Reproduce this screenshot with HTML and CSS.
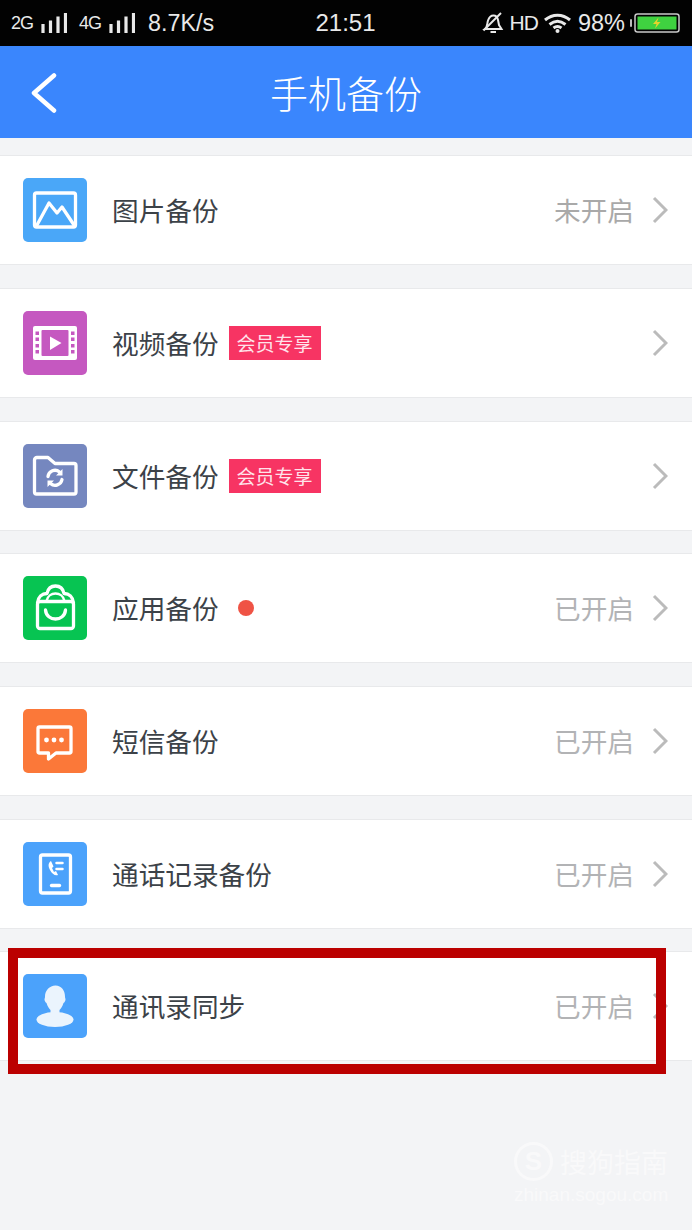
FILE: index.html
```html
<!DOCTYPE html>
<html lang="zh-CN">
<head>
<meta charset="utf-8">
<title>手机备份</title>
<link rel="stylesheet" href="styles.css">
</head>
<body>
<div class="page">
  <div class="statusbar">
    <div class="sb-left">
      <span class="net">2G</span>
      <svg class="bars" viewBox="0 0 26 20"><path d="M2 20V11M9.500 20V7.500M17 20V3.500M24.500 20V0"/></svg>
      <span class="net net-4g">4G</span>
      <svg class="bars" viewBox="0 0 26 20"><path d="M2 20V11M9.500 20V7.500M17 20V3.500M24.500 20V0"/></svg>
      <span class="speed">8.7K/s</span>
    </div>
    <div class="sb-time">21:51</div>
    <div class="sb-right">
      <svg class="bell" viewBox="0 0 22 22"><path d="M3 17c2.500-2 2-5.500 3-8.500s3-5 5.500-5 4 2 4.500 4.500l1 5 2.500 4z"/><path d="M1.500 18.500 19 1"/><path d="M8.500 20h5.500"/></svg>
      <span class="hd">HD</span>
      <svg class="wifi" viewBox="0 0 27 20"><path d="M1 7c7.500-6.500 17.500-6.500 25 0"/><path d="M5.500 11.500c5-4 11-4 16 0"/><path d="M9.500 15c2.500-1.800 5.500-1.800 8 0"/><circle cx="13.500" cy="18" r="2" class="wifi-dot"/></svg>
      <span class="pct">98%</span>
      <svg class="battery" viewBox="0 0 50 20"><rect x="0" y="6" width="2" height="8" rx="1" class="bat-cap"/><rect x="5" y="1" width="44" height="18" rx="2.500" class="bat-shell"/><rect x="7.500" y="3.500" width="39" height="13" class="bat-fill"/><path d="M28.500 4.500 23 11h3.500l-1.500 4.500 5.500-6.500H27z" class="bat-bolt"/></svg>
    </div>
  </div>

  <header class="navbar">
    <svg class="back" viewBox="0 0 26 40"><path d="M23 2.500 3 20l20 17.500"/></svg>
    <h1 class="title">手机备份</h1>
  </header>

  <main class="list">
    <div class="row">
      <span class="icon icon-sky"><svg viewBox="0 0 64 64"><rect x="11.500" y="15" width="41" height="34" rx="2" class="ln"/><path d="M14 47 26 25l8 10 5-6 12 18" class="ln"/></svg></span>
      <span class="label">图片备份</span>
      <span class="state state-off">未开启</span>
      <svg class="chev" viewBox="0 0 16 28"><path d="M2 2l12 12L2 26"/></svg>
    </div>

    <div class="row">
      <span class="icon icon-purple"><svg viewBox="0 0 64 64"><rect x="10" y="15" width="44" height="34" rx="2" class="wh"/><rect x="18.500" y="19" width="27" height="26" rx="1" class="cut-purple"/><path d="M27 25.500 38.500 32 27 39z" class="wh"/><path d="M12.500 20.500h3.500v3.500h-3.500zM12.500 26.500h3.500v3.500h-3.500zM12.500 33h3.500v3.500h-3.500zM12.500 39h3.500v3.500h-3.500zM48 20.500h3.500v3.500H48zM48 26.500h3.500v3.500H48zM48 33h3.500v3.500H48zM48 39h3.500v3.500H48z" class="cut-purple"/></svg></span>
      <span class="label">视频备份</span>
      <span class="badge">会员专享</span>
      <span class="state"></span>
      <svg class="chev" viewBox="0 0 16 28"><path d="M2 2l12 12L2 26"/></svg>
    </div>

    <div class="row">
      <span class="icon icon-slate"><svg viewBox="0 0 64 64"><path d="M11.500 16a2.500 2.500 0 0 1 2.500-2.500h11l7 6h19a2 2 0 0 1 2 2V48a2 2 0 0 1-2 2H13.500a2 2 0 0 1-2-2z" class="ln"/><path d="M25 32.500a7 7 0 0 1 11.500-4.500M39 35.500a7 7 0 0 1-11.500 4" class="ln"/><path d="M39.500 25v6.500H33zM24.500 43v-6.500H31z" class="wh"/></svg></span>
      <span class="label">文件备份</span>
      <span class="badge">会员专享</span>
      <span class="state"></span>
      <svg class="chev" viewBox="0 0 16 28"><path d="M2 2l12 12L2 26"/></svg>
    </div>

    <div class="row">
      <span class="icon icon-green"><svg viewBox="0 0 64 64"><rect x="14.500" y="25.500" width="36" height="27" rx="2.500" class="ln"/><path d="M14.500 27C15 21 19 17.500 24 17.500 25 12.500 28.500 10 32.500 10s7.500 2.500 8.500 7.500c5 0 9 3.500 9.500 9.500" class="ln"/><path d="M23.500 25c1-5 5-7.500 9-7.500s8 2.500 9 7.500" class="ln ln-thin"/><path d="M22.500 34c1 12 19 12 20 0" class="ln"/></svg></span>
      <span class="label">应用备份</span>
      <span class="dot"></span>
      <span class="state">已开启</span>
      <svg class="chev" viewBox="0 0 16 28"><path d="M2 2l12 12L2 26"/></svg>
    </div>

    <div class="row">
      <span class="icon icon-orange"><svg viewBox="0 0 64 64"><path d="M16.500 18h30a1.500 1.500 0 0 1 1.500 1.500v23a1.500 1.500 0 0 1-1.500 1.500H33l-7.500 6v-6h-9a1.500 1.500 0 0 1-1.500-1.500v-23a1.500 1.500 0 0 1 1.500-1.500z" class="ln"/><circle cx="23.500" cy="31" r="2.400" class="wh"/><circle cx="31" cy="31" r="2.400" class="wh"/><circle cx="38.500" cy="31" r="2.400" class="wh"/></svg></span>
      <span class="label">短信备份</span>
      <span class="state">已开启</span>
      <svg class="chev" viewBox="0 0 16 28"><path d="M2 2l12 12L2 26"/></svg>
    </div>

    <div class="row">
      <span class="icon icon-blue"><svg viewBox="0 0 64 64"><rect x="17.500" y="13" width="30" height="38" rx="2" class="ln"/><path d="M28 19c-3 2-3 5-1 9s5 6 8 5l-2-4-2 1-2-4 1.500-1.500z" class="wh"/><path d="M33.500 21h6M33.500 27h6" class="ln ln-thin"/><path d="M28.500 43.500h8" class="ln"/></svg></span>
      <span class="label">通话记录备份</span>
      <span class="state">已开启</span>
      <svg class="chev" viewBox="0 0 16 28"><path d="M2 2l12 12L2 26"/></svg>
    </div>

    <div class="row">
      <span class="icon icon-blue"><svg viewBox="0 0 64 64"><path d="M32.500 11.500c6 0 9.500 5 9.500 11 0 1.500.5 2 .5 3s-1 3-2 3.500c-1 3.500-3 6-4 7v3h-9v-3c-1-1-3-3.500-4-7-1-.5-2-2.500-2-3.500s.5-1.500.5-3c0-6 4.500-11 10.500-11z" class="soft"/><ellipse cx="32" cy="45.500" rx="18.500" ry="7.500" class="soft"/></svg></span>
      <span class="label">通讯录同步</span>
      <span class="state">已开启</span>
      <svg class="chev" viewBox="0 0 16 28"><path d="M2 2l12 12L2 26"/></svg>
    </div>
  </main>

  <div class="highlight"></div>

  <div class="watermark">
    <div class="wm-top">
      <span class="wm-logo">S</span>
      <span class="wm-name">搜狗指南</span>
    </div>
    <div class="wm-url">zhinan.sogou.com</div>
  </div>
</div>
</body>
</html>
```
FILE: styles.css
```css
* { box-sizing: border-box; }
html, body { margin: 0; padding: 0; }
body {
  background: #f3f4f6;
  font-family: "Noto Sans CJK SC", "Liberation Sans", sans-serif;
}
.page {
  position: relative;
  width: 692px;
  height: 1230px;
  overflow: hidden;
  background: #f3f4f6;
}

/* status bar */
.statusbar {
  height: 46px;
  background: #020202;
  color: #e9e9e9;
  display: grid;
  grid-template-columns: 1fr auto 1fr;
  align-items: center;
  padding: 0 12px 0 11px;
  font-family: "Liberation Sans", Arial, sans-serif;
}
.sb-left, .sb-right { display: flex; align-items: center; }
.sb-right { justify-content: flex-end; }
.net { font-size: 18px; letter-spacing: -1px; margin-right: 8px; }
.net-4g { margin-left: 12px; }
.bars { width: 26px; height: 20px; }
.bars path { stroke: #e9e9e9; stroke-width: 3.200px; fill: none; }
.speed { font-size: 23.300px; margin-left: 13px; }
.sb-time { font-size: 24px; }
.bell { width: 22px; height: 22px; }
.bell path { fill: none; stroke: #e9e9e9; stroke-width: 2px; }
.hd { font-size: 21px; letter-spacing: -1px; margin-left: 6px; }
.wifi { width: 27px; height: 20px; margin-left: 6px; }
.wifi path { fill: none; stroke: #e9e9e9; stroke-width: 3px; }
.wifi-dot { fill: #e9e9e9; }
.pct { font-size: 23.500px; margin-left: 7px; }
.battery { width: 50px; height: 20px; margin-left: 5px; }
.bat-cap { fill: #bbb; }
.bat-shell { fill: none; stroke: #c9c9c9; stroke-width: 1.500px; }
.bat-fill { fill: #3fd240; }
.bat-bolt { fill: #e5d32b; }

/* navigation */
.navbar {
  position: relative;
  height: 92px;
  background: #3a86fd;
  display: flex;
  align-items: center;
  justify-content: center;
}
.back {
  position: absolute;
  left: 31px;
  top: 27px;
  width: 26px;
  height: 40px;
}
.back path { fill: none; stroke: #fff; stroke-width: 4.500px; stroke-linecap: round; stroke-linejoin: round; }
.title {
  margin: 0;
  font-size: 38px;
  font-weight: 300;
  color: #fff;
  line-height: 1;
}

/* list */
.list {
  display: flex;
  flex-direction: column;
  gap: 22.670px;
  padding-top: 17.330px;
}
.row {
  height: 110px;
  background: #fff;
  border-top: 1px solid #e8e9eb;
  border-bottom: 1px solid #e8e9eb;
  display: flex;
  align-items: center;
  padding: 0 24px 0 23px;
}
.icon {
  width: 64px;
  height: 64px;
  border-radius: 5px;
  flex: none;
  display: block;
}
.icon svg { display: block; width: 64px; height: 64px; }
.icon-sky { background: #4aa7f8; }
.icon-purple { background: #c558c0; }
.icon-slate { background: #7587bf; }
.icon-green { background: #07c452; }
.icon-orange { background: #fb7839; }
.icon-blue { background: #4ba2fb; }
.ln { fill: none; stroke: #fff; stroke-width: 3.300px; stroke-linejoin: round; stroke-linecap: round; }
.ln-thin { stroke-width: 2.500px; }
.wh { fill: #fff; }
.soft { fill: #ebf4fd; }
.cut-purple { fill: #c558c0; }

.label {
  margin-left: 25px;
  margin-top: 1px;
  font-size: 26.670px;
  line-height: 1;
  color: #3c4248;
  white-space: nowrap;
}
.badge {
  margin-left: 10px;
  width: 92px;
  height: 34px;
  background: #f73463;
  color: #ffe3ea;
  font-size: 19px;
  line-height: 34px;
  text-align: center;
  white-space: nowrap;
}
.dot {
  margin-left: 19px;
  width: 16px;
  height: 16px;
  border-radius: 50%;
  background: #ef5345;
}
.state {
  margin-left: auto;
  margin-top: 1px;
  font-size: 26.670px;
  line-height: 1;
  color: #b2b3b5;
  white-space: nowrap;
}
.state-off { color: #a9a9a9; }
.chev { width: 16px; height: 28px; margin-left: 18px; flex: none; }
.chev path { fill: none; stroke: #bbb; stroke-width: 3px; }

/* annotation frame */
.highlight {
  position: absolute;
  left: 8px;
  top: 948px;
  width: 658px;
  height: 126px;
  border: 10px solid #bb0000;
}

/* watermark */
.watermark {
  position: absolute;
  left: 514px;
  top: 1142px;
  width: 156px;
  color: #f9f9fa;
}
.wm-top { display: flex; align-items: center; gap: 7px; }
.wm-logo {
  width: 39px;
  height: 39px;
  border: 3px solid #f9f9fa;
  border-radius: 50%;
  font: bold 26px/33px "Liberation Sans", sans-serif;
  text-align: center;
}
.wm-name { font-size: 27px; line-height: 39px; white-space: nowrap; }
.wm-url { font: 19px/22px "Liberation Sans", sans-serif; margin-top: 3px; white-space: nowrap; }
```
